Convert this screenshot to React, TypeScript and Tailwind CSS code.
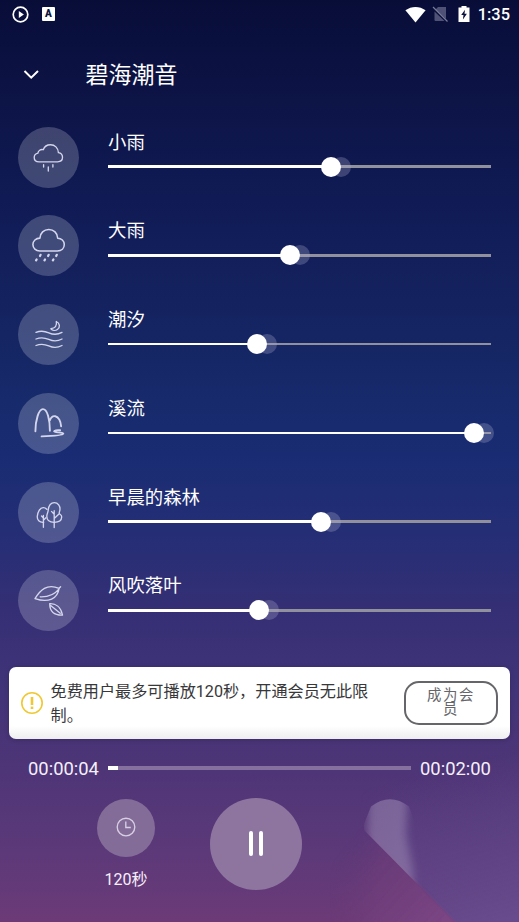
import type { ReactNode } from "react";

const line = {
  fill: "none",
  stroke: "currentColor",
  strokeWidth: 1.35,
  strokeLinecap: "round" as const,
  strokeLinejoin: "round" as const,
};

function Glyph({ children, width = 1.35 }: { children: ReactNode; width?: number }) {
  return (
    <svg viewBox="-0.3 0 61 61" className="h-[61px] w-[61px] text-[#d3d6ec]" {...line} strokeWidth={width}>
      {children}
    </svg>
  );
}

function LightRain() {
  return (
    <Glyph>
      <path d="M20.8 34.800h18.500c3.100 0 4.900-2 4.900-4.500 0-2.700-1.800-4.400-4.100-4.700-.3-4.700-3.600-7.900-7.800-7.900-3.600 0-6.300 2-7.300 5-2.800-.7-5.100 1-5.400 3.500-2.600.6-3.700 2.300-3.700 4.300 0 2.500 2 4.300 4.900 4.300Z" />
      <path d="M25.300 37.700v2.300M30 40v4M34.600 37.700v2.300" />
    </Glyph>
  );
}

function HeavyRain() {
  return (
    <Glyph width={1.55}>
      <path d="M21.500 35.900h17.500c4.300 0 7-2.800 7-6.300 0-3.800-2.900-6.400-6.600-6.400-.2-5.200-4-8.800-8.900-8.800s-8.700 3.600-8.900 8.700c-4 0-7 2.800-7 6.500 0 3.600 2.900 6.300 6.900 6.300Z" />
      <path d="m22.300 39.800-.6 1.200m8.700-1.200-.6 1.200m8.700-1.200-.6 1.200M18.300 44.500l-.5.9m8.900-.9-.5.9m8.900-.9-.5.9" strokeWidth="2.200" />
    </Glyph>
  );
}

function Tide() {
  return (
    <Glyph>
      <path d="M38 17.500c.9 4.500-1.200 6.900-5.400 7.200 1.500 1.800 4.300 2.300 6.500.8 3.100-2.100 2.500-6.400-1.100-8Z" />
      <path d="M17.700 28.400c4-1.700 7.600-1.900 12.800.4 4.800 2.200 8.700 2 13.200-.4M17.700 35c4-1.700 7.600-1.900 12.800.4 4.800 2.200 8.700 2 13.200-.4M17.700 41.500c4-1.700 7.600-1.900 12.800.4 4.800 2.200 8.700 2 13.200-.4" />
    </Glyph>
  );
}

function Stream() {
  return (
    <Glyph width={1.9}>
      <path d="M17.100 38.300c0-10.800 3.300-22.200 7.500-22.200 4.500 0 7 10.500 7 21.700M31.600 27.300c1.100-3.200 3.200-4.500 5.400-4.100 3.300.6 5.500 5.200 5.800 10M41.800 37.300c-3.300-.5-6 .2-6 1.100 0 1 9.700 1 9.200 2.400-.6 1.700-9.900 2.200-21.700 2.600" />
    </Glyph>
  );
}

function Forest() {
  return (
    <Glyph>
      <path d="M35.900 45.500V28.700M25.100 45.200V33.400M35.900 36.500l4.500-4.300M35.900 32.300l-2.700-2.900M25.100 38.300l2.500-2.500M25.100 36l-1.900-2" />
      <path d="M25.300 40.300c-4.300.3-6.600-2.200-6.300-6 .3-4.600 2.700-8.500 5.900-8.700 1.500-.1 2.700.7 3.600 1.700M35.900 40.300c-5 0-7.400-2.300-7.400-6 0-2.300 1.100-3.400 1.400-5.900.4-4.600 2.800-7.800 6.200-7.800 3.500 0 6.100 3.400 5.500 7.500-.2 1.700-1.400 2.900-.2 4 1.400 1.200 2 .9 2 3-.1 3.500-2.900 5.200-7.500 5.200Z" />
    </Glyph>
  );
}

function Leaves() {
  return (
    <Glyph>
      <path d="M16.700 28.600C22.100 19.800 28.500 13.500 40.800 18.300c-1.500 10.300-10.500 14.900-24.100 10.300ZM40.800 18.300l1.500-1.600M22 26.800c7.700.3 14-2 18.800-8" />
      <path d="M31.400 33.700c5.900-.4 11.200 3.200 12.800 11.400-8.500.3-12.700-3.500-12.800-11.400Zm1 1.700 9.500 7.900" />
    </Glyph>
  );
}

const sounds = [
  { name: "小雨", value: 223, icon: <LightRain /> },
  { name: "大雨", value: 181.8, icon: <HeavyRain /> },
  { name: "潮汐", value: 148.8, icon: <Tide /> },
  { name: "溪流", value: 366, icon: <Stream /> },
  { name: "早晨的森林", value: 213, icon: <Forest /> },
  { name: "风吹落叶", value: 151, icon: <Leaves /> },
];

function SoundRow({ name, value, icon }: (typeof sounds)[number]) {
  return (
    <div className="flex h-[88.75px] items-start gap-[28.8px]">
      <div className="h-[61px] w-[61px] shrink-0 rounded-full bg-white/20">{icon}</div>
      <div className="w-[383px] pt-[4px]">
        <div className="h-6 text-[18.4px] leading-6 text-white">{name}</div>
        <div className="relative mt-[2px] flex h-5 items-center">
          <div className="h-[2.5px] w-full bg-[#91919d]" />
          <div className="absolute left-0 h-[2.5px] bg-white" style={{ width: value }} />
          <div className="absolute h-5 w-5 rounded-full bg-[#a8a9c9]/30" style={{ left: value }} />
          <div className="absolute h-5 w-5 rounded-full bg-white" style={{ left: value - 10 }} />
        </div>
      </div>
    </div>
  );
}

function StatusBar() {
  return (
    <header className="flex h-7 items-center justify-between pr-[9px] pl-[12px] text-white">
      <div className="flex items-center gap-[13px]">
        <svg viewBox="0 0 17 17" className="h-[17px] w-[17px]">
          <circle cx="8.5" cy="8.500" r="7.300" fill="none" stroke="currentColor" strokeWidth="1.700" />
          <path d="M6.800 4.900v7.200l5.100-3.600Z" fill="currentColor" />
        </svg>
        <div className="flex h-[14px] w-[13px] items-center justify-center rounded-[1px] bg-white font-[Roboto] text-[10px] leading-none font-black text-[#10163e]">A</div>
      </div>
      <div className="flex items-center">
        <svg viewBox="0 0 21 17" className="h-[17px] w-[21px]" fill="currentColor">
          <path d="M.4 4.300C6.500-.2 14.500-.2 20.600 4.300L10.500 16.500Z" />
        </svg>
        <svg viewBox="0 0 17 18" className="ml-[6px] h-[18px] w-[17px]">
          <path d="M6 2h8v12L3.500 4.500Zm-3.500 4.500 10 9.500H3.500a1 1 0 0 1-1-1Z" fill="#4f5276" />
          <path d="m1 2 14.500 14.500" stroke="#777a98" strokeWidth="1.300" />
        </svg>
        <svg viewBox="0 0 12 18" className="ml-[9px] h-[18px] w-[12px]">
          <path d="M3.500 1h5v1.500H11.500V17H.5V2.500h3Z" fill="currentColor" />
          <path d="M7 4.700 3.200 10h2.300l-.6 4.500L8.900 8.700H6.500Z" fill="#0b103e" />
        </svg>
        <span className="ml-[8px] pt-px font-[Roboto] text-[16.4px] leading-7 font-medium">1:35</span>
      </div>
    </header>
  );
}

function LightBeam() {
  return (
    <svg viewBox="0 0 199 172" className="pointer-events-none absolute right-0 bottom-0 h-[172px] w-[199px]">
      <defs>
        <linearGradient id="violet" x1="60" x2="100" y1="35" y2="190" gradientUnits="userSpaceOnUse">
          <stop offset="0" stopColor="#5a4488" stopOpacity="0" />
          <stop offset=".4" stopColor="#5c4486" stopOpacity=".6" />
          <stop offset="1" stopColor="#674b8c" />
        </linearGradient>
        <linearGradient id="plum" x1="35" x2="130" y1="85" y2="172" gradientUnits="userSpaceOnUse">
          <stop offset="0" stopColor="#683a77" stopOpacity="0" />
          <stop offset=".3" stopColor="#6e3d79" stopOpacity=".65" />
          <stop offset="1" stopColor="#7d4785" stopOpacity=".95" />
        </linearGradient>
        <linearGradient id="fade" x1="10" x2="60" y1="0" y2="0" gradientUnits="userSpaceOnUse">
          <stop offset="0" stopColor="#000" />
          <stop offset="1" stopColor="#fff" />
        </linearGradient>
        <linearGradient id="violetFade" x1="40" x2="75" y1="0" y2="0" gradientUnits="userSpaceOnUse">
          <stop offset="0" stopColor="#000" />
          <stop offset="1" stopColor="#fff" />
        </linearGradient>
        <mask id="plumMask" maskUnits="userSpaceOnUse" x="0" y="0" width="199" height="172">
          <rect width="199" height="172" fill="url(#fade)" />
        </mask>
        <mask id="violetMask" maskUnits="userSpaceOnUse" x="0" y="0" width="199" height="172">
          <rect width="199" height="172" fill="url(#violetFade)" />
        </mask>
        <clipPath id="cap">
          <path d="M51 56.500Q70 42 89 56.500L112 120V149L44 80V74Z" />
        </clipPath>
        <filter id="soft" x="-20%" y="-20%" width="140%" height="140%">
          <feGaussianBlur stdDeviation="1" />
        </filter>
        <filter id="haze" x="-40%" y="-40%" width="180%" height="180%">
          <feGaussianBlur stdDeviation="4" />
        </filter>
      </defs>
      <g mask="url(#violetMask)">
        <path d="M-33 0H199V172H135Z" fill="url(#violet)" />
      </g>
      <g mask="url(#plumMask)">
        <path d="M-33 0-33 190H153Z" fill="url(#plum)" filter="url(#soft)" />
      </g>
      <g clipPath="url(#cap)">
        <path d="M49 20H89L86 85 93 120V160L47 100Z" fill="#a292b8" fillOpacity=".5" filter="url(#haze)" />
      </g>
    </svg>
  );
}

export default function App() {
  return (
    <main className="relative h-[922px] w-[519px] overflow-hidden bg-[linear-gradient(180deg,#080d38_0px,#0d1446_100px,#101b55_200px,#14225f_300px,#172a6b_400px,#192c73_455px,#242e75_530px,#352f75_610px,#413478_690px,#4e3577_770px,#5c3979_850px,#6c3a77_922px)] font-['Roboto','Noto_Sans_CJK_SC',sans-serif]">
      <LightBeam />
      <div className="relative">
        <StatusBar />
        <div className="flex h-[98.5px] items-center gap-[45.5px] pb-[3px] pl-[23px] text-white">
          <svg viewBox="0 0 17 12" className="mb-[2px] h-3 w-[17px]" fill="none" stroke="currentColor" strokeWidth="2">
            <path d="m1.500 2 6.700 6.700L15 2" />
          </svg>
          <h1 className="text-[23px] leading-8 font-normal">碧海潮音</h1>
        </div>
        <section className="h-[540.5px] pl-[18.2px]">
          {sounds.map((sound) => <SoundRow key={sound.name} {...sound} />)}
        </section>
        <aside className="mx-[9px] flex h-[72px] items-center rounded-[7px] bg-[linear-gradient(180deg,white_82%,#eeeeef_100%)] pr-3 pl-[12px] shadow-[0_1px_4px_rgba(30,20,60,.3)]">
          <svg viewBox="0 0 22 22" className="h-[22px] w-[22px] shrink-0 text-[#efc832]" fill="none" stroke="currentColor">
            <circle cx="11" cy="11" r="10.200" strokeWidth="1.600" />
            <path d="M11 5v8" strokeWidth="2.600" />
            <path d="M11 14.600v2.400" strokeWidth="2.600" />
          </svg>
          <p className="ml-[7.5px] w-[330px] pt-[2px] text-[16.15px] leading-6 text-[#38383b]">免费用户最多可播放120秒，开通会员无此限制。</p>
          <button className="ml-auto h-11 w-[94px] rounded-[15px] border-2 border-[#65656a] px-5 text-center text-[14.4px] leading-[14.5px] tracking-[1.6px] text-[#65656a]">成为会员</button>
        </aside>
        <div className="mt-[18px] flex h-6 items-center pl-7 text-[18.4px] leading-6 text-[#f4effa]">
          <span className="w-[80px]">00:00:04</span>
          <div className="mb-[2px] flex h-1 w-[303px] bg-[#86719e]"><div className="h-full w-[10px] bg-white" /></div>
          <span className="ml-[9px]">00:02:00</span>
        </div>
        <div className="flex items-start pt-[18px] pl-[97px]">
          <div className="w-[58px]">
            <button className="flex h-[58px] w-[58px] items-center justify-center rounded-full bg-[#846c98]">
              <svg viewBox="0 0 20 20" className="mb-[2px] h-5 w-5 text-[#d8cfe4]" fill="none" stroke="currentColor" strokeWidth="1.35">
                <circle cx="10" cy="10" r="8.800" /><path d="M9.800 4.500v6h5" />
              </svg>
            </button>
            <div className="mt-[11px] text-center text-[16px] leading-6 text-[#f6effa]">120秒</div>
          </div>
          <button className="mt-[-1.5px] ml-[55px] flex h-[92px] w-[92px] items-center justify-center gap-[6px] rounded-full bg-[#8e75a0]">
            <span className="h-[25px] w-[4px] rounded-full bg-white" />
            <span className="h-[25px] w-[4px] rounded-full bg-white" />
          </button>
        </div>
      </div>
    </main>
  );
}
